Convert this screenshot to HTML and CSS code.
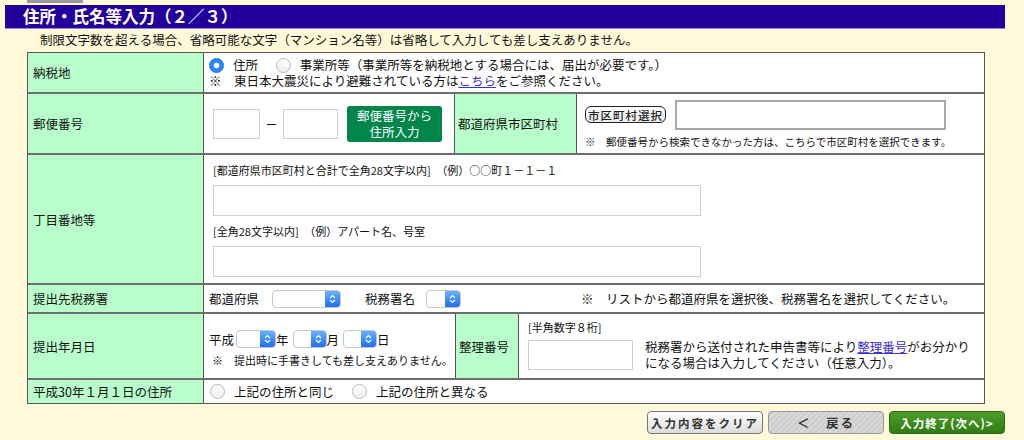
FILE: index.html
```html
<!DOCTYPE html>
<html lang="ja">

<head>
    <meta charset="UTF-8">
    <meta name="viewport" content="width=device-width, initial-scale=1.0">
    <title>住所・氏名等入力</title>
    <link rel="stylesheet" href="styles.css">
</head>

<body>
    <div class="tabEdge"></div>
    <h1 class="pageTitle">住所・氏名等入力（２／３）</h1>
    <p class="lead">制限文字数を超える場合、省略可能な文字（マンション名等）は省略して入力しても差し支えありません。</p>

    <div class="form">
        <div class="row r1">
            <div class="label">納税地</div>
            <div class="cell">
                <div class="line">
                    <span class="radio on"></span><span class="rtext">住所</span>
                    <span class="radio"></span><span class="rtext">事業所等（事業所等を納税地とする場合には、届出が必要です。）</span>
                </div>
                <div class="line">※　東日本大震災により避難されている方は<a href="#">こちら</a>をご参照ください。</div>
            </div>
        </div>

        <div class="row r2">
            <div class="label">郵便番号</div>
            <div class="cell postal">
                <span class="input zip1"></span>
                <span class="dash">－</span>
                <span class="input zip2"></span>
                <button class="greenBtn">郵便番号から<br>住所入力</button>
            </div>
            <div class="label sub city">都道府県市区町村</div>
            <div class="cell cityCell">
                <div class="cityTop">
                    <button class="pillBtn">市区町村選択</button>
                    <span class="input cityInput"></span>
                </div>
                <div class="small">※　郵便番号から検索できなかった方は、こちらで市区町村を選択できます。</div>
            </div>
        </div>

        <div class="row r3">
            <div class="label">丁目番地等</div>
            <div class="cell addr">
                <div class="hint">[都道府県市区町村と合計で全角28文字以内]　（例）○○町１－１－１</div>
                <span class="input wide"></span>
                <div class="hint">[全角28文字以内]　（例）アパート名、号室</div>
                <span class="input wide"></span>
            </div>
        </div>

        <div class="row r4">
            <div class="label">提出先税務署</div>
            <div class="cell office">
                <span>都道府県</span>
                <span class="sel pref"><i><svg width="7" height="10" viewBox="0 0 7 10"><path d="M1 4 L3.5 1.5 L6 4 M1 6 L3.5 8.5 L6 6" fill="none" stroke="#fff" stroke-width="1.2"/></svg></i></span>
                <span class="gapL">税務署名</span>
                <span class="sel tiny"><i><svg width="7" height="10" viewBox="0 0 7 10"><path d="M1 4 L3.5 1.5 L6 4 M1 6 L3.5 8.5 L6 6" fill="none" stroke="#fff" stroke-width="1.2"/></svg></i></span>
                <span class="officeNote">※　リストから都道府県を選択後、税務署名を選択してください。</span>
            </div>
        </div>

        <div class="row r5">
            <div class="label">提出年月日</div>
            <div class="cell date">
                <div class="dateLine">
                    <span>平成</span>
                    <span class="sel era"><i><svg width="7" height="10" viewBox="0 0 7 10"><path d="M1 4 L3.5 1.5 L6 4 M1 6 L3.5 8.5 L6 6" fill="none" stroke="#fff" stroke-width="1.2"/></svg></i></span>
                    <span>年</span>
                    <span class="sel md"><i><svg width="7" height="10" viewBox="0 0 7 10"><path d="M1 4 L3.5 1.5 L6 4 M1 6 L3.5 8.5 L6 6" fill="none" stroke="#fff" stroke-width="1.2"/></svg></i></span>
                    <span>月</span>
                    <span class="sel md"><i><svg width="7" height="10" viewBox="0 0 7 10"><path d="M1 4 L3.5 1.5 L6 4 M1 6 L3.5 8.5 L6 6" fill="none" stroke="#fff" stroke-width="1.2"/></svg></i></span>
                    <span>日</span>
                </div>
                <div class="small">※　提出時に手書きしても差し支えありません。</div>
            </div>
            <div class="label sub ref">整理番号</div>
            <div class="cell refCell">
                <div class="hint">[半角数字８桁]</div>
                <div class="refBody">
                    <span class="input refInput"></span>
                    <p class="refText">税務署から送付された申告書等により<a href="#">整理番号</a>がお分かり<br>になる場合は入力してください（任意入力）。</p>
                </div>
            </div>
        </div>

        <div class="row r6">
            <div class="label">平成30年１月１日の住所</div>
            <div class="cell">
                <span class="radio"></span><span class="rtext">上記の住所と同じ</span>
                <span class="radio"></span><span class="rtext">上記の住所と異なる</span>
            </div>
        </div>
    </div>

    <div class="actions">
        <button class="btn clear">入力内容をクリア</button>
        <button class="btn back">＜　戻る</button>
        <button class="btn next">入力終了(次へ)&gt;</button>
    </div>
</body>

</html>
```

FILE: styles.css
```css
* {
    box-sizing: border-box;
}

body {
    margin: 0;
    background-color: #fff8d9;
    font-family: "Noto Sans CJK JP", "Noto Sans", sans-serif;
    font-size: 12.5px;
    color: #111;
    line-height: 15px;
}

.tabEdge {
    margin-left: 27px;
    width: 56px;
    height: 3px;
    background-color: #9a9a9a;
}

.pageTitle {
    margin: 2px 0 0 5px;
    width: 1000px;
    height: 24px;
    background-color: #22009b;
    color: #fff;
    font-size: 16.5px;
    font-weight: bold;
    line-height: 23px;
    padding-left: 18px;
    border-bottom: 1px solid #8f86d0;
}

.lead {
    margin: 3px 0 0 40px;
    height: 20px;
    line-height: 15px;
}

.form {
    margin-left: 27px;
    width: 958px;
    border: 1px solid #555;
    background-color: #fff;
}

.row {
    display: flex;
    border-top: 2px solid #6e6e6e;
}

.r1 {
    height: 39px;
    border-top: 0;
}

.r2 {
    height: 61px;
}

.r3 {
    height: 130px;
}

.r4 {
    height: 29px;
}

.r5 {
    height: 66px;
}

.r6 {
    height: 25px;
}

.label {
    width: 176px;
    flex-shrink: 0;
    background-color: #b9ffcb;
    border-right: 1px solid #555;
    padding-left: 5px;
    display: flex;
    align-items: center;
}

.label.sub {
    border-left: 1px solid #555;
    padding-left: 3px;
}

.label.city {
    width: 123px;
}

.label.ref {
    width: 64px;
}

.cell {
    flex: 1;
    padding-left: 5px;
    display: flex;
    align-items: center;
}

.r1 .cell {
    flex-direction: column;
    align-items: flex-start;
    justify-content: center;
}

.r1 .line {
    line-height: 15px;
}

a {
    color: #3b2fd6;
}

.radio {
    display: inline-block;
    width: 15px;
    height: 15px;
    border-radius: 50%;
    border: 1px solid #b9b9b9;
    background: linear-gradient(#ffffff, #ececec);
    vertical-align: -3px;
    margin-right: 9px;
}

.radio.on {
    border-color: #1b6fe6;
    background: radial-gradient(circle, #fff 0, #fff 2.5px, #2a87f8 3.2px);
}

.rtext {
    margin-right: 15px;
}

.r6 .cell {
    padding-left: 6px;
}

.r6 .rtext {
    margin-right: 18px;
}

.input {
    display: inline-block;
    background-color: #fff;
    border: 1px solid #cfcfcf;
}

.postal {
    flex: none;
    width: 250px;
    padding-left: 9px;
}

.zip1 {
    width: 47px;
    height: 30px;
}

.dash {
    width: 23px;
    text-align: center;
}

.zip2 {
    width: 55px;
    height: 30px;
}

.greenBtn {
    margin-left: 9px;
    width: 95px;
    height: 36px;
    border: 0;
    border-radius: 3px;
    background-color: #00864b;
    color: #fff;
    font-family: inherit;
    font-size: 12.5px;
    line-height: 16px;
    padding: 0;
}

.cityCell {
    flex-direction: column;
    align-items: flex-start;
    justify-content: center;
    padding-left: 8px;
}

.cityTop {
    display: flex;
    align-items: center;
}

.pillBtn {
    width: 81px;
    height: 17px;
    padding: 0;
    border: 1px solid #222;
    border-radius: 6px;
    background: linear-gradient(#ffffff, #ececec);
    font-family: inherit;
    font-size: 11.5px;
    font-weight: 500;
    line-height: 14px;
    letter-spacing: 1px;
    color: #222;
}

.cityInput {
    margin-left: 9px;
    width: 271px;
    height: 30px;
    border: 2px solid #a8a8a8;
}

.small {
    font-size: 10.5px;
    line-height: 13px;
    margin-top: 5px;
}

.addr {
    flex-direction: column;
    align-items: flex-start;
    justify-content: center;
    padding-left: 9px;
}

.hint {
    font-size: 11px;
    line-height: 13px;
}

.addr .hint {
    margin: 3px 0 8px;
}

.wide {
    width: 488px;
    height: 31px;
}

.addr .wide:first-of-type {
    margin-bottom: 6px;
}

.sel {
    display: inline-flex;
    justify-content: flex-end;
    height: 18px;
    border: 1px solid #c6c6c6;
    border-radius: 4px;
    background-color: #fff;
    overflow: hidden;
    vertical-align: middle;
}

.sel i {
    width: 15px;
    display: flex;
    align-items: center;
    justify-content: center;
    background: linear-gradient(#69b1fb, #1c6ff0);
}

.office .pref {
    width: 69px;
    margin-left: 13px;
}

.gapL {
    margin-left: 24px;
}

.office .tiny {
    width: 35px;
    margin-left: 11px;
}

.officeNote {
    margin-left: 120px;
}

.date {
    flex: none;
    width: 251px;
    flex-direction: column;
    align-items: flex-start;
    justify-content: center;
    padding-top: 5px;
}

.dateLine {
    display: flex;
    align-items: center;
}

.sel.era {
    width: 40px;
    margin-left: 2px;
}

.sel.md {
    width: 34px;
    margin-left: 4px;
}

.date .small {
    font-size: 11px;
    margin-top: 6px;
    padding-left: 3px;
}

.refCell {
    flex-direction: column;
    align-items: flex-start;
    justify-content: center;
    padding-left: 9px;
}

.refCell .hint {
    margin-bottom: 5px;
}

.refBody {
    display: flex;
    align-items: center;
}

.refInput {
    width: 105px;
    height: 30px;
}

.refText {
    margin: 0 0 0 12px;
    line-height: 16px;
}

.actions {
    display: flex;
    justify-content: flex-end;
    gap: 5px;
    width: 1005px;
    margin-top: 7px;
}

.btn {
    width: 116px;
    height: 23px;
    padding: 0;
    border-radius: 4px;
    font-family: inherit;
    font-size: 11.5px;
    font-weight: bold;
    letter-spacing: 2px;
}

.clear {
    border: 1px solid #777;
    background: linear-gradient(#ffffff, #dcdcdc);
    color: #333;
}

.back {
    border: 1px solid #999;
    background: repeating-linear-gradient(135deg, #d8d8d8 0, #d8d8d8 2px, #cdcdcd 2px, #cdcdcd 4px);
    color: #333;
    font-size: 12.5px;
}

.next {
    border: 1px solid #2b6b12;
    background: linear-gradient(#4e9c2a, #2f7d12);
    color: #fff;
    letter-spacing: 1px;
}
```
